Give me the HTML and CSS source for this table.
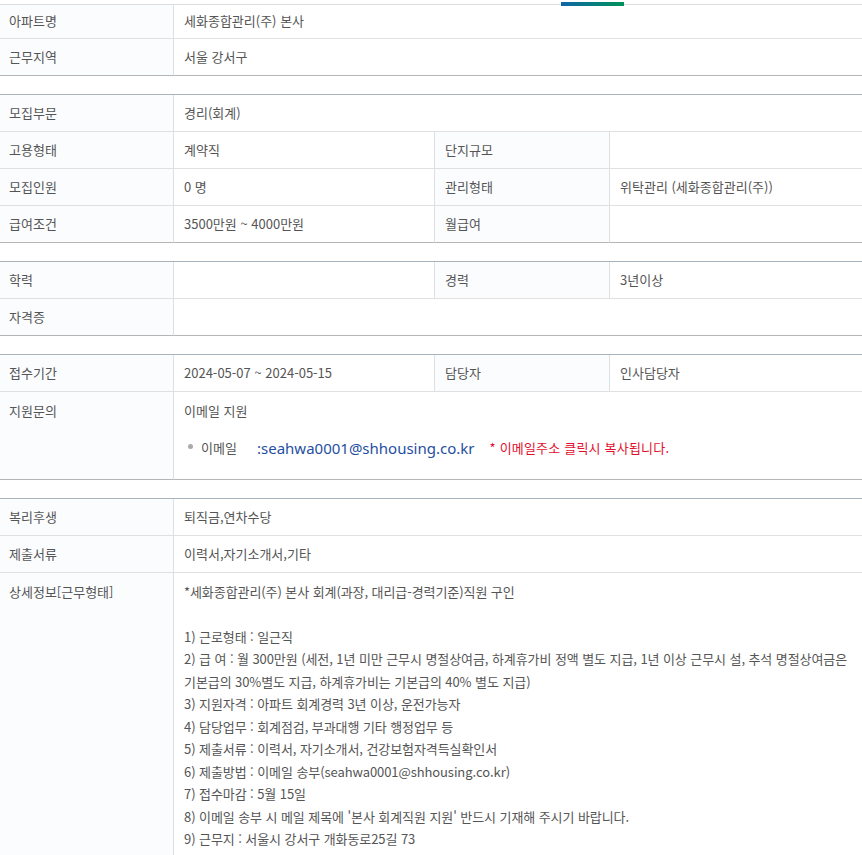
FILE: index.html
```html
<!DOCTYPE html>
<html lang="ko">
<head>
<meta charset="utf-8">
<title>채용정보</title>
<link rel="stylesheet" href="styles.css">
</head>
<body>
<div class="tabs"><span class="tabbar"></span></div>

<table class="info first">
  <colgroup><col class="c1"><col class="c2"><col class="c3"><col class="c4"></colgroup>
  <tr class="short"><th>아파트명</th><td colspan="3">세화종합관리(주) 본사</td></tr>
  <tr><th>근무지역</th><td colspan="3">서울 강서구</td></tr>
</table>

<table class="info">
  <colgroup><col class="c1"><col class="c2"><col class="c3"><col class="c4"></colgroup>
  <tr><th>모집부문</th><td colspan="3">경리(회계)</td></tr>
  <tr><th>고용형태</th><td>계약직</td><th>단지규모</th><td></td></tr>
  <tr><th>모집인원</th><td>0 명</td><th>관리형태</th><td>위탁관리 (세화종합관리(주))</td></tr>
  <tr><th>급여조건</th><td>3500만원 ~ 4000만원</td><th>월급여</th><td></td></tr>
</table>

<table class="info">
  <colgroup><col class="c1"><col class="c2"><col class="c3"><col class="c4"></colgroup>
  <tr><th>학력</th><td></td><th>경력</th><td>3년이상</td></tr>
  <tr><th>자격증</th><td colspan="3"></td></tr>
</table>

<table class="info">
  <colgroup><col class="c1"><col class="c2"><col class="c3"><col class="c4"></colgroup>
  <tr><th>접수기간</th><td>2024-05-07 ~ 2024-05-15</td><th>담당자</th><td>인사담당자</td></tr>
  <tr class="apply">
    <th>지원문의</th>
    <td colspan="3">
      <div>이메일 지원</div>
      <div class="mailline"><span class="dot"></span><span class="mlabel">이메일</span><span class="mail">:seahwa0001@shhousing.co.kr</span><span class="note">* 이메일주소 클릭시 복사됩니다.</span></div>
    </td>
  </tr>
</table>

<table class="info">
  <colgroup><col class="c1"><col class="c2"><col class="c3"><col class="c4"></colgroup>
  <tr><th>복리후생</th><td colspan="3">퇴직금,연차수당</td></tr>
  <tr><th>제출서류</th><td colspan="3">이력서,자기소개서,기타</td></tr>
  <tr class="detail">
    <th>상세정보[근무형태]</th>
    <td colspan="3"><div class="lines">*세화종합관리(주) 본사 회계(과장, 대리급-경력기준)직원 구인<br>
&nbsp;<br>
1) 근로형태 : 일근직<br>
2) 급 여 : 월 300만원 (세전, 1년 미만 근무시 명절상여금, 하계휴가비 정액 별도 지급, 1년 이상 근무시 설, 추석 명절상여금은<br>
기본급의 30%별도 지급, 하계휴가비는 기본급의 40% 별도 지급)<br>
3) 지원자격 : 아파트 회계경력 3년 이상, 운전가능자<br>
4) 담당업무 : 회계점검, 부과대행 기타 행정업무 등<br>
5) 제출서류 : 이력서, 자기소개서, 건강보험자격득실확인서<br>
6) 제출방법 : 이메일 송부(seahwa0001@shhousing.co.kr)<br>
7) 접수마감 : 5월 15일<br>
8) 이메일 송부 시 메일 제목에 '본사 회계직원 지원' 반드시 기재해 주시기 바랍니다.<br>
9) 근무지 : 서울시 강서구 개화동로25길 73</div></td>
  </tr>
</table>
</body>
</html>
```

FILE: styles.css
```css
html, body {
  margin: 0;
  padding: 0;
  background: #ffffff;
}
body {
  font-family: "Noto Sans CJK KR", "Noto Sans", sans-serif;
  font-size: 13px;
  color: #555555;
}
.tabs {
  position: relative;
  height: 4px;
}
.tabbar {
  position: absolute;
  left: 561px;
  top: 2px;
  width: 63px;
  height: 4px;
  background: linear-gradient(to right, #0f66a8, #00925a);
  z-index: 2;
}
.info {
  width: 862px;
  table-layout: fixed;
  border-collapse: separate;
  border-spacing: 0;
  border-top: 1px solid #a8b3bb;
  margin-top: 18px;
}
.info.first {
  margin-top: 0;
  border-top-color: #dddddd;
}
.c1 { width: 173px; }
.c2 { width: 261px; }
.c3 { width: 175px; }
.c4 { width: 253px; }
.info th,
.info td {
  padding: 8px 10px;
  line-height: 20px;
  text-align: left;
  font-weight: normal;
  vertical-align: middle;
  border-bottom: 1px solid #e0e0e0;
  border-left: 1px solid #dcdfe3;
  white-space: nowrap;
}
.info th {
  background: #fbfcfe;
}
.info tr > th:first-child {
  border-left: none;
  padding-left: 9px;
}
.info tr:last-child > th,
.info tr:last-child > td {
  border-bottom-color: #b5b5b5;
}
.info tr.short > th,
.info tr.short > td {
  padding-top: 6px;
  padding-bottom: 7px;
}
.info tr.apply > th,
.info tr.apply > td {
  vertical-align: top;
  padding-top: 9px;
  padding-bottom: 20px;
}
.mailline {
  margin-top: 16px;
  line-height: 22px;
  display: flex;
  align-items: center;
}
.dot {
  width: 5px;
  height: 5px;
  border-radius: 50%;
  background: #aaaaaa;
  margin-left: 4px;
  margin-right: 8px;
  margin-top: -4px;
}
.mlabel {
  width: 56px;
}
.mail {
  font-family: "Noto Sans", "Noto Sans CJK KR", sans-serif;
  font-size: 15px;
  color: #1f4f9f;
}
.note {
  margin-left: 15px;
  color: #e2102e;
  letter-spacing: 0.2px;
}
.info tr.detail > th,
.info tr.detail > td {
  vertical-align: top;
  padding-top: 7.5px;
  padding-bottom: 12px;
  line-height: 22.5px;
  border-bottom: none;
}
.lines {
  letter-spacing: -0.08px;
}
```
